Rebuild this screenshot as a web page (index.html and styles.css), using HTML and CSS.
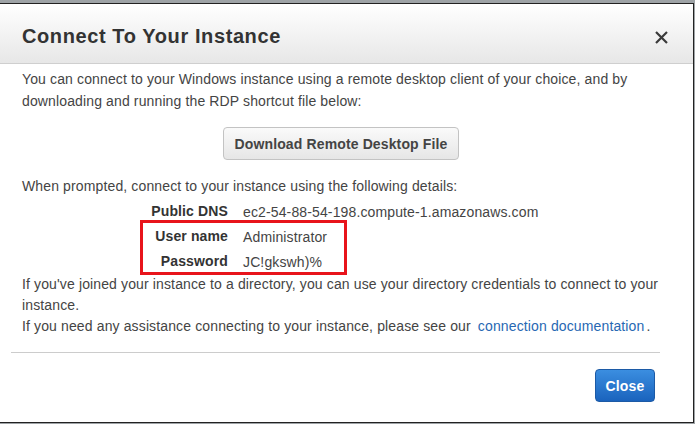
FILE: index.html
```html
<!DOCTYPE html>
<html>
<head>
<meta charset="utf-8">
<link rel="stylesheet" href="styles.css">
</head>
<body>
<div class="dialog">
  <div class="header">
    <h1 class="title">Connect To Your Instance</h1>
    <svg class="close-x" width="13" height="13" viewBox="0 0 13 13"><path d="M1 1 L12 12 M12 1 L1 12" stroke="#3a3a3a" stroke-width="2.2" fill="none"/></svg>
  </div>
  <div class="body">
    <p class="para">You can connect to your Windows instance using a remote desktop client of your choice, and by downloading and running the RDP shortcut file below:</p>
    <div class="btn-row"><button class="btn">Download Remote Desktop File</button></div>
    <p class="para">When prompted, connect to your instance using the following details:</p>
    <div class="details">
      <div class="label">Public DNS</div><div class="value">ec2-54-88-54-198.compute-1.amazonaws.com</div>
      <div class="label">User name</div><div class="value">Administrator</div>
      <div class="label">Password</div><div class="value">JC!gkswh)%</div>
      <div class="highlight"></div>
    </div>
    <p class="para tight">If you've joined your instance to a directory, you can use your directory credentials to connect to your instance.<br>If you need any assistance connecting to your instance, please see our <a class="link" href="#">connection documentation</a>.</p>
  </div>
  <div class="footer">
    <button class="btn-primary">Close</button>
  </div>
</div>
</body>
</html>
```
FILE: styles.css
```css
html, body {
  margin: 0;
  padding: 0;
}
body {
  background: #9ea3a6;
  height: 424px;
  overflow: hidden;
  font-family: "Liberation Sans", Arial, sans-serif;
  font-size: 14px;
  letter-spacing: 0.13px;
  color: #444;
}
.dialog {
  margin-top: 3px;
  width: 693px;
  height: 418px;
  background: #fff;
  border-top: 1px solid #222;
  border-right: 1px solid #222;
  border-bottom: 1px solid #222;
  display: flex;
  flex-direction: column;
}
.header {
  height: 60px;
  box-sizing: border-box;
  border-bottom: 1px solid #cfcfcf;
  background: linear-gradient(#ffffff, #e7e7e7);
  display: flex;
  align-items: center;
  justify-content: space-between;
  padding: 6px 25px 0 22px;
}
.title {
  margin: 0;
  font-size: 20px;
  font-weight: bold;
  letter-spacing: 0.6px;
  color: #333;
}
.close-x {
  display: block;
  margin-top: 1px;
}
.body {
  padding: 4px 33px 15px 22px;
}
.para {
  margin: 0;
  line-height: 22px;
}
.para.tight {
  line-height: 21px;
}
.btn-row {
  display: flex;
  justify-content: center;
  margin: 15px 0 15px;
}
.btn {
  font-family: inherit;
  font-size: 14px;
  font-weight: bold;
  letter-spacing: 0.13px;
  color: #444;
  height: 33px;
  padding: 0 11px;
  background: linear-gradient(#fafafa, #e6e6e6);
  border: 1px solid #c3c3c3;
  border-radius: 4px;
}
.details {
  position: relative;
  display: grid;
  grid-template-columns: 78px auto;
  column-gap: 15px;
  grid-auto-rows: 25px;
  margin-left: 128px;
  margin-top: 2px;
  line-height: 25px;
}
.label {
  font-weight: bold;
  text-align: right;
  white-space: nowrap;
  color: #333;
}
.value {
  padding-top: 2px;
  line-height: 23px;
  white-space: nowrap;
}
.highlight {
  position: absolute;
  left: -10px;
  top: 21px;
  width: 201px;
  height: 49px;
  border: 3px solid #e8141b;
}
.link {
  color: #2768b3;
  text-decoration: none;
  padding: 0 2px 0 3px;
}
.footer {
  margin: 0 33px 0 11px;
  border-top: 1px solid #cccccc;
  padding-top: 16px;
  display: flex;
  justify-content: flex-end;
  padding-right: 5px;
}
.btn-primary {
  font-family: inherit;
  font-size: 14px;
  font-weight: bold;
  letter-spacing: 0.13px;
  color: #fff;
  width: 60px;
  height: 33px;
  padding: 0;
  background: linear-gradient(#3b8ee0, #1a63bd);
  border: 1px solid #1c5aa6;
  border-radius: 4px;
}
```
